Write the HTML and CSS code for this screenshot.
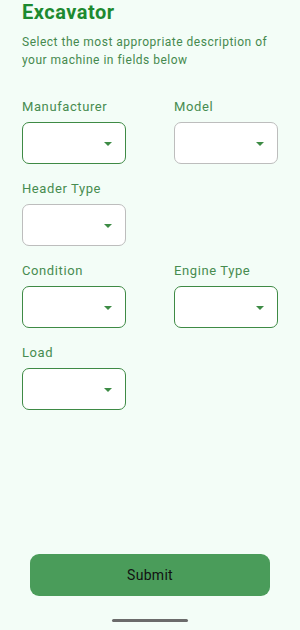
FILE: index.html
```html
<!DOCTYPE html>
<html lang="en">
<head>
  <meta charset="UTF-8">
  <meta name="viewport" content="width=device-width, initial-scale=1.0">
  <title>Excavator</title>
  <link rel="stylesheet" href="styles.css">
</head>
<body>

<div class="screen">
  <!-- Header -->
  <div class="intro">
    <h1 class="title">Excavator</h1>
    <p class="subtitle">Select the most appropriate description of your machine in fields below</p>
  </div>

  <!-- Fields -->
  <div class="fields">
    <div class="field">
      <div class="label">Manufacturer</div>
      <div class="select active"><span class="arrow"></span></div>
    </div>
    <div class="field">
      <div class="label">Model</div>
      <div class="select"><span class="arrow"></span></div>
    </div>
    <div class="field">
      <div class="label">Header Type</div>
      <div class="select"><span class="arrow"></span></div>
    </div>
    <div class="field"></div>
    <div class="field">
      <div class="label">Condition</div>
      <div class="select active"><span class="arrow"></span></div>
    </div>
    <div class="field">
      <div class="label">Engine Type</div>
      <div class="select active"><span class="arrow"></span></div>
    </div>
    <div class="field">
      <div class="label">Load</div>
      <div class="select active"><span class="arrow"></span></div>
    </div>
  </div>

  <!-- Bottom -->
  <div class="footer">
    <button class="submit">Submit</button>
    <div class="home-bar"></div>
  </div>
</div>

</body>
</html>
```

FILE: styles.css
```css
body {
  margin: 0;
  background-color: #f3fdf7;
  font-family: Roboto, "Liberation Sans", sans-serif;
}

.screen {
  display: flex;
  flex-direction: column;
  height: 630px;
  padding: 0 22px;
  box-sizing: border-box;
}

.title {
  margin: 0;
  font-size: 20px;
  line-height: 24px;
  font-weight: 700;
  letter-spacing: 0.5px;
  color: #1d8a30;
}

.subtitle {
  margin: 9px 0 0;
  font-size: 12px;
  line-height: 18px;
  letter-spacing: 0.5px;
  color: #45894e;
}

/* Two columns of dropdowns */
.fields {
  display: grid;
  grid-template-columns: 104px 104px;
  column-gap: 48px;
  row-gap: 17px;
  margin-top: 30px;
}

.label {
  font-size: 13px;
  line-height: 16px;
  letter-spacing: 0.6px;
  color: #478c50;
  margin-bottom: 7px;
}

.select {
  position: relative;
  height: 42px;
  border: 1px solid #bdbdbd;
  border-radius: 7px;
  background-color: #fff;
  box-sizing: border-box;
}

.select.active {
  border-color: #3e8a45;
}

.arrow {
  position: absolute;
  right: 13px;
  top: 19px;
  width: 0;
  height: 0;
  border-left: 4px solid transparent;
  border-right: 4px solid transparent;
  border-top: 4px solid #3d8b45;
}

.footer {
  margin-top: auto;
  display: flex;
  flex-direction: column;
  align-items: center;
}

.submit {
  width: 240px;
  height: 42px;
  border: none;
  border-radius: 9px;
  background-color: #4a9c5a;
  color: #111;
  font-family: Roboto, "Liberation Sans", sans-serif;
  font-size: 14px;
  letter-spacing: 0.3px;
  cursor: pointer;
}

.home-bar {
  width: 76px;
  height: 3px;
  border-radius: 2px;
  background-color: #6b6b6b;
  margin: 23px 0 8px;
}
```
